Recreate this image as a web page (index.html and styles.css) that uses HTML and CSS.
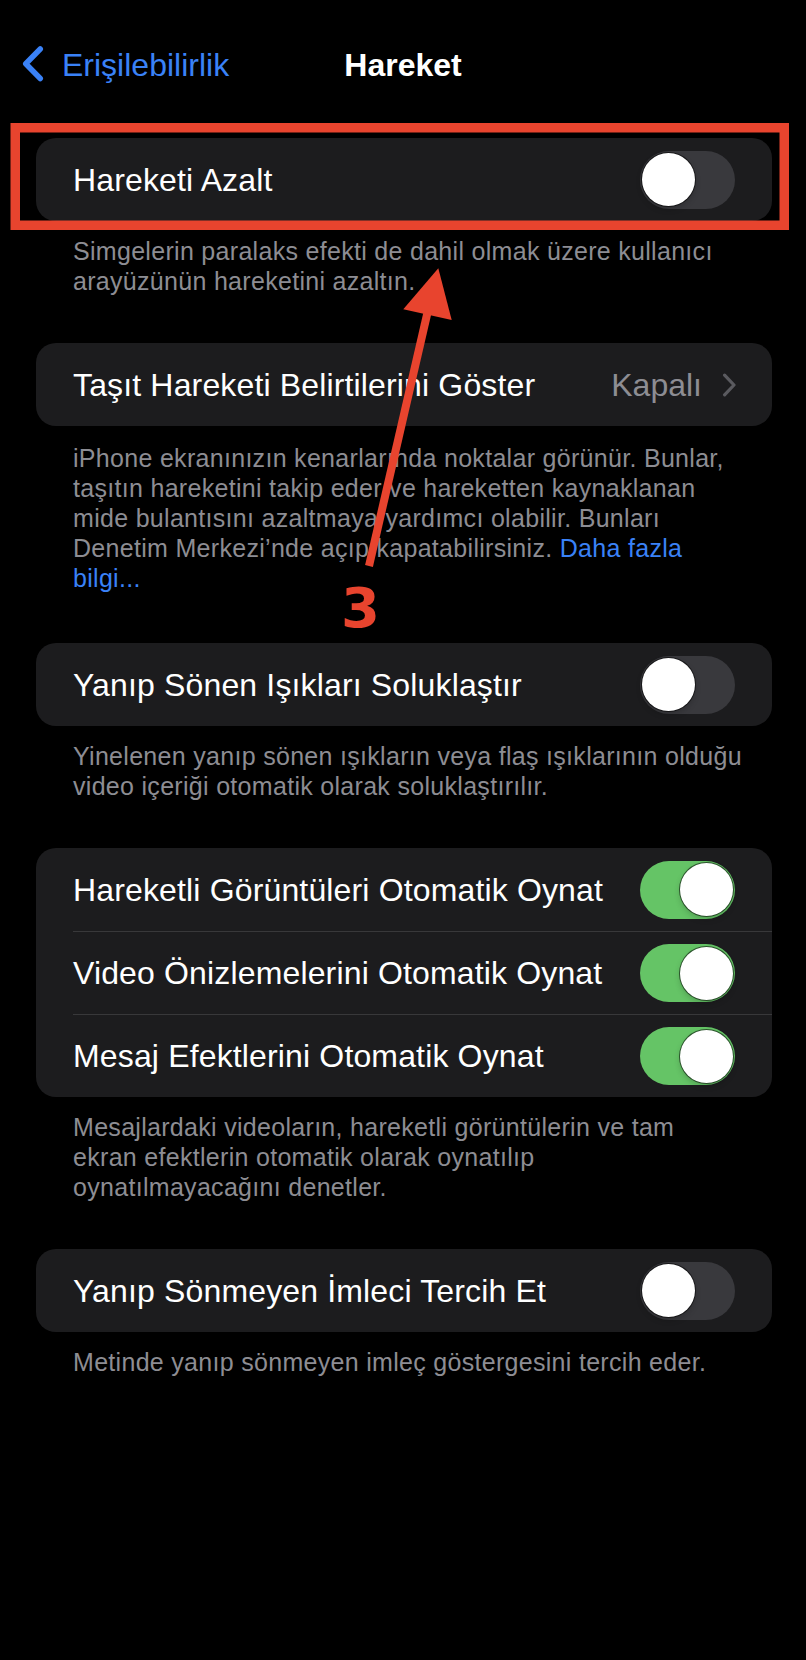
FILE: index.html
```html
<!DOCTYPE html>
<html lang="tr">
<head>
<meta charset="utf-8">
<title>Hareket</title>
<link rel="stylesheet" href="styles.css">
</head>
<body>
<div class="screen">
  <header class="nav">
    <a class="back" href="#">
      <svg class="back-icon" width="24" height="40" viewBox="0 0 24 40"><path d="M19.25 4 L4.75 18.75 L19.25 33.5" fill="none" stroke="#3a82f7" stroke-width="5.5" stroke-linecap="round" stroke-linejoin="round"/></svg>
      <span>Erişilebilirlik</span>
    </a>
    <h1 class="title">Hareket</h1>
    <span class="nav-spacer"></span>
  </header>

  <main class="content">
    <section class="group">
      <div class="card">
        <div class="row"><span class="label">Hareketi Azalt</span><span class="switch"><span class="knob"></span></span></div>
      </div>
      <p class="footer">Simgelerin paralaks efekti de dahil olmak üzere kullanıcı<br>arayüzünün hareketini azaltın.</p>
    </section>

    <section class="group">
      <div class="card">
        <div class="row"><span class="label">Taşıt Hareketi Belirtilerini Göster</span><span class="detail"><span class="value">Kapalı</span><svg class="chevron" width="14" height="24" viewBox="0 0 14 24"><path d="M2.6 2.2 L12 12 L2.6 21.8" fill="none" stroke="#5a5a5f" stroke-width="3.2" stroke-linecap="round" stroke-linejoin="round"/></svg></span></div>
      </div>
      <p class="footer footer-long">iPhone ekranınızın kenarlarında noktalar görünür. Bunlar,<br>taşıtın hareketini takip eder ve hareketten kaynaklanan<br>mide bulantısını azaltmaya yardımcı olabilir. Bunları<br>Denetim Merkezi’nde açıp kapatabilirsiniz. <a class="link" href="#">Daha fazla<br>bilgi...</a></p>
    </section>

    <section class="group">
      <div class="card">
        <div class="row"><span class="label">Yanıp Sönen Işıkları Soluklaştır</span><span class="switch"><span class="knob"></span></span></div>
      </div>
      <p class="footer">Yinelenen yanıp sönen ışıkların veya flaş ışıklarının olduğu<br>video içeriği otomatik olarak soluklaştırılır.</p>
    </section>

    <section class="group">
      <div class="card">
        <div class="row"><span class="label">Hareketli Görüntüleri Otomatik Oynat</span><span class="switch on"><span class="knob"></span></span></div>
        <div class="row"><span class="label">Video Önizlemelerini Otomatik Oynat</span><span class="switch on"><span class="knob"></span></span></div>
        <div class="row"><span class="label">Mesaj Efektlerini Otomatik Oynat</span><span class="switch on"><span class="knob"></span></span></div>
      </div>
      <p class="footer">Mesajlardaki videoların, hareketli görüntülerin ve tam<br>ekran efektlerin otomatik olarak oynatılıp<br>oynatılmayacağını denetler.</p>
    </section>

    <section class="group">
      <div class="card">
        <div class="row"><span class="label">Yanıp Sönmeyen İmleci Tercih Et</span><span class="switch"><span class="knob"></span></span></div>
      </div>
      <p class="footer">Metinde yanıp sönmeyen imleç göstergesini tercih eder.</p>
    </section>
  </main>

  <svg class="annotation" width="806" height="1660" viewBox="0 0 806 1660">
    <rect x="15.25" y="127.75" width="769" height="97.5" fill="none" stroke="#e8442e" stroke-width="9.5"/>
    <line x1="369" y1="566" x2="429" y2="306" stroke="#e8442e" stroke-width="8"/>
    <polygon points="438.3,268.3 403.3,309.3 451.7,320" fill="#e8442e"/>
  </svg>
  <div class="annotation-num">3</div>
</div>
</body>
</html>
```

FILE: styles.css
```css
* { box-sizing: border-box; }

html, body {
  margin: 0;
  padding: 0;
  background: #000;
}

body {
  font-family: "Liberation Sans", Arial, sans-serif;
  color: #fff;
}

.screen {
  position: relative;
  width: 806px;
  min-height: 1660px;
  background: #000;
  overflow: hidden;
}

.nav {
  display: grid;
  grid-template-columns: 1fr auto 1fr;
  align-items: center;
  padding-top: 45px;
  height: 83px;
}

.back {
  display: flex;
  align-items: center;
  padding-left: 21px;
  color: #3a82f7;
  text-decoration: none;
  font-size: 32px;
  line-height: 38px;
}

.back-icon {
  display: block;
  margin-right: 17px;
}

.title {
  margin: 0;
  font-size: 32px;
  line-height: 38px;
  font-weight: 700;
  color: #fff;
}

.content {
  margin-top: 55px;
}

.card {
  margin: 0 34px 0 36px;
  background: #1c1c1e;
  border-radius: 20px;
  overflow: hidden;
}

.row {
  display: flex;
  align-items: center;
  justify-content: space-between;
  height: 83px;
  margin-left: 37px;
  padding-right: 37px;
}

.row + .row {
  border-top: 1px solid #38383a;
}

.label {
  font-size: 32px;
  line-height: 38px;
  letter-spacing: 0.15px;
  color: #fff;
  white-space: nowrap;
}

.detail {
  display: flex;
  align-items: center;
}

.value {
  font-size: 32px;
  line-height: 38px;
  color: #8d8d93;
  margin-right: 20px;
}

.chevron {
  display: block;
  margin-right: -1px;
}

.switch {
  position: relative;
  display: block;
  width: 95px;
  height: 58px;
  border-radius: 29px;
  background: #39393d;
  flex: none;
}

.switch .knob {
  position: absolute;
  top: 2.5px;
  left: 1.5px;
  width: 53px;
  height: 53px;
  border-radius: 50%;
  background: #fff;
  box-shadow: 0 0 0 1px rgba(0, 0, 0, 0.55), 0 3px 6px rgba(0, 0, 0, 0.2);
}

.switch.on {
  background: #65c466;
}

.switch.on .knob {
  left: auto;
  right: 2.5px;
}

.footer {
  margin: 0 0 47px;
  padding: 15px 0 0 73px;
  font-size: 25px;
  line-height: 30px;
  letter-spacing: 0.3px;
  color: #8d8d93;
  white-space: nowrap;
}

.footer-long {
  padding-top: 17px;
  margin-bottom: 50px;
}

.link {
  color: #3a82f7;
  text-decoration: none;
}

.annotation {
  position: absolute;
  top: 0;
  left: 0;
  pointer-events: none;
}

.annotation-num {
  position: absolute;
  top: 580px;
  left: 341px;
  font-family: "DejaVu Sans", "Liberation Sans", sans-serif;
  font-size: 56px;
  line-height: 56px;
  font-weight: 700;
  color: #e8442e;
  pointer-events: none;
}
```
